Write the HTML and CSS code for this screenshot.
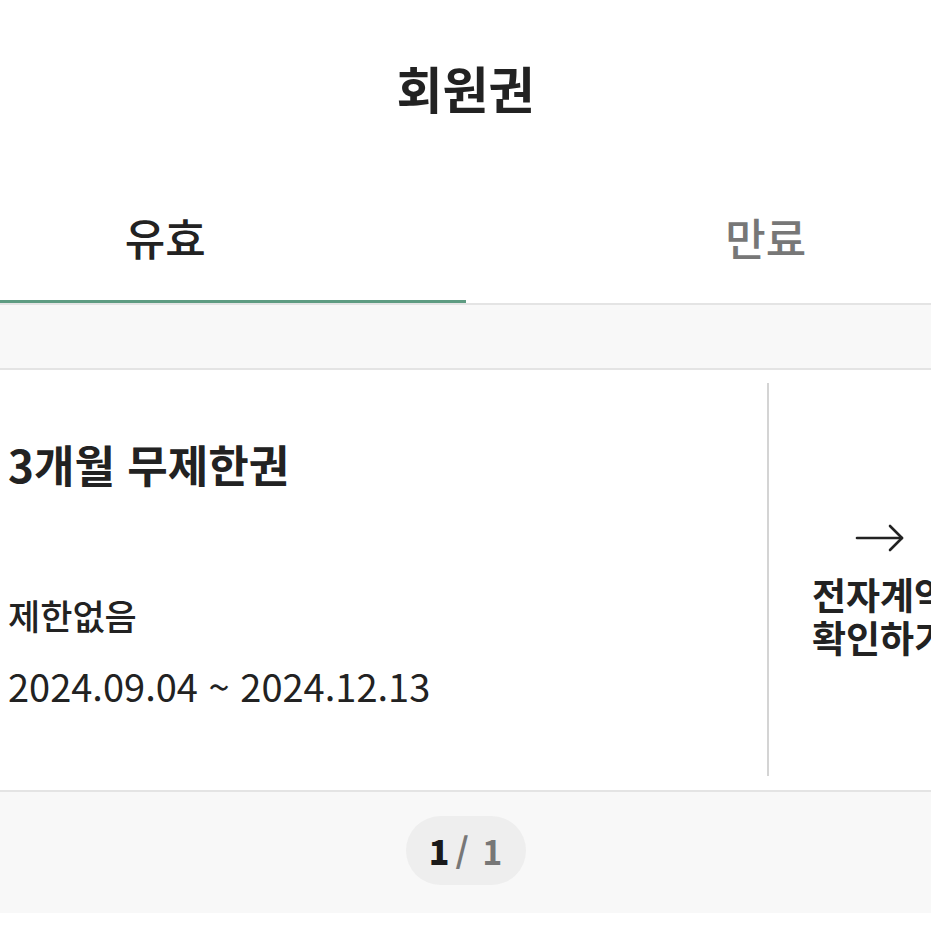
FILE: index.html
```
<!DOCTYPE html>
<html lang="ko">
<head>
    <meta charset="UTF-8">
    <meta name="viewport" content="width=device-width, initial-scale=1.0">
    <title>회원권</title>
    <link rel="stylesheet" href="styles.css">
</head>
<body>
    <div class="page">
        <header class="page-header">
            <h1>회원권</h1>
        </header>

        <ul class="tabs">
            <li class="tab active">유효</li>
            <li class="tab">만료</li>
        </ul>

        <div class="spacer"></div>

        <div class="pass-card">
            <div class="pass-info">
                <h2 class="pass-name">3개월 무제한권</h2>
                <p class="pass-limit">제한없음</p>
                <p class="pass-period">2024.09.04 ~ 2024.12.13</p>
            </div>
            <a class="pass-contract" href="#">
                <svg class="arrow" width="50" height="28" viewBox="0 0 50 28" fill="none" stroke="#222" stroke-width="2.6" stroke-linecap="round" stroke-linejoin="round">
                    <path d="M2 14 H47"/>
                    <path d="M35 2 L47 14 L35 26"/>
                </svg>
                <span>전자계약<br>확인하기</span>
            </a>
        </div>

        <div class="pager-wrap">
            <div class="pager"><b>1</b> / 1</div>
        </div>
    </div>
</body>
</html>
```

FILE: styles.css
```
:root{
    --text : #222;
    --muted : #777;
    --line : #e4e4e4;
    --gray-bg : #f8f8f8;
    --green : #5e9c82;
}

*{
    padding: 0;
    margin: 0;
    box-sizing: border-box;
}

ul{
    list-style: none;
}

a{
    text-decoration: none;
    color: inherit;
}

body{
    background: #fff;
    color: var(--text);
    font-family: "Noto Sans CJK KR", "Noto Sans", sans-serif;
    overflow-x: hidden;
}

.page{
    width: 931px;
    overflow: hidden;
}

.page-header{
    height: 185px;
    padding-top: 59px;
    text-align: center;
}

.page-header h1{
    font-size: 50px;
    font-weight: 700;
    line-height: 56px;
}

.tabs{
    display: flex;
    height: 120px;
    border-bottom: 2px solid var(--line);
}

.tab{
    flex: 1;
    display: flex;
    align-items: center;
    justify-content: center;
    font-size: 44px;
    font-weight: 500;
    color: var(--muted);
    position: relative;
    padding-bottom: 14px;
}

.tab:first-child{
    padding-right: 135px;
}

.tab:last-child{
    padding-left: 135px;
}

.tab.active{
    color: var(--text);
}

.tab.active::after{
    position: absolute;
    content: '';
    left: 0;
    right: 0;
    bottom: 0;
    height: 3px;
    background: var(--green);
}

.spacer{
    height: 65px;
    background: var(--gray-bg);
    border-bottom: 2px solid var(--line);
}

.pass-card{
    display: flex;
    padding: 13px 0 14px;
    border-bottom: 2px solid var(--line);
}

.pass-info{
    width: 769px;
    flex-shrink: 0;
    padding: 56px 0 69px 8px;
    border-right: 2px solid #d4d4d4;
}

.pass-name{
    font-size: 44px;
    font-weight: 600;
    line-height: 50px;
    margin-bottom: 106px;
}

.pass-limit{
    font-size: 35px;
    font-weight: 500;
    line-height: 40px;
    margin-bottom: 30px;
}

.pass-period{
    font-size: 38px;
    font-weight: 400;
    line-height: 42px;
}

.pass-contract{
    width: 222px;
    flex-shrink: 0;
    display: flex;
    flex-direction: column;
    align-items: center;
    justify-content: center;
    padding-top: 23px;
    font-size: 37px;
    font-weight: 600;
    line-height: 43px;
    text-align: center;
}

.pass-contract .arrow{
    margin-bottom: 21px;
}

.pass-contract span{
    white-space: nowrap;
}

.pager-wrap{
    height: 121px;
    padding-bottom: 4px;
    background: var(--gray-bg);
    display: flex;
    align-items: center;
    justify-content: center;
}

.pager{
    width: 120px;
    height: 69px;
    border-radius: 35px;
    background: #eeeeee;
    display: flex;
    align-items: center;
    justify-content: center;
    gap: 6px;
    font-size: 34px;
    font-weight: 700;
    color: var(--muted);
    word-spacing: 4px;
}

.pager b{
    color: #1a1a1a;
    font-weight: 800;
}
```
